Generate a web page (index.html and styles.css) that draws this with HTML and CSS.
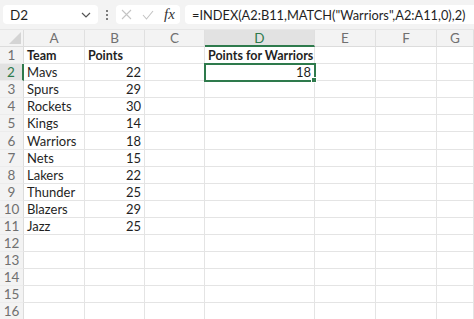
FILE: index.html
```html
<!DOCTYPE html>
<html lang="en">
<head>
    <meta charset="UTF-8">
    <title>INDEX MATCH</title>
    <link rel="stylesheet" href="styles.css">
</head>
<body>
    <div class="topbar">
        <div class="namebox">
            <span>D2</span>
            <svg class="chev" width="10" height="6" viewBox="0 0 10 6"><path d="M1 1 L5 5 L9 1" fill="none" stroke="#555" stroke-width="1.2"/></svg>
        </div>
        <div class="dots"><i></i><i></i><i></i></div>
        <div class="fxbox">
            <svg width="11" height="11" viewBox="0 0 11 11"><path d="M1 1 L10 10 M10 1 L1 10" stroke="#c4c4c4" stroke-width="1.1"/></svg>
            <svg width="12" height="10" viewBox="0 0 12 10"><path d="M1 5 L4.5 9 L11 1" fill="none" stroke="#c4c4c4" stroke-width="1.1"/></svg>
            <span class="fx">fx</span>
        </div>
        <div class="formula">=INDEX(A2:B11,MATCH("Warriors",A2:A11,0),2)</div>
    </div>

    <div class="sheet">
        <div class="corner"></div>
        <div class="colhead">A</div><div class="colhead">B</div><div class="colhead">C</div>
        <div class="colhead sel">D</div><div class="colhead">E</div><div class="colhead">F</div><div class="colhead">G</div>

        <div class="rowhead">1</div><div class="cell b">Team</div><div class="cell b">Points</div><div class="cell"></div><div class="cell b">Points for Warriors</div><div class="cell"></div><div class="cell"></div><div class="cell"></div>
        <div class="rowhead sel">2</div><div class="cell">Mavs</div><div class="cell num">22</div><div class="cell"></div><div class="cell num active">18</div><div class="cell"></div><div class="cell"></div><div class="cell"></div>
        <div class="rowhead">3</div><div class="cell">Spurs</div><div class="cell num">29</div><div class="cell"></div><div class="cell"></div><div class="cell"></div><div class="cell"></div><div class="cell"></div>
        <div class="rowhead">4</div><div class="cell">Rockets</div><div class="cell num">30</div><div class="cell"></div><div class="cell"></div><div class="cell"></div><div class="cell"></div><div class="cell"></div>
        <div class="rowhead">5</div><div class="cell">Kings</div><div class="cell num">14</div><div class="cell"></div><div class="cell"></div><div class="cell"></div><div class="cell"></div><div class="cell"></div>
        <div class="rowhead">6</div><div class="cell">Warriors</div><div class="cell num">18</div><div class="cell"></div><div class="cell"></div><div class="cell"></div><div class="cell"></div><div class="cell"></div>
        <div class="rowhead">7</div><div class="cell">Nets</div><div class="cell num">15</div><div class="cell"></div><div class="cell"></div><div class="cell"></div><div class="cell"></div><div class="cell"></div>
        <div class="rowhead">8</div><div class="cell">Lakers</div><div class="cell num">22</div><div class="cell"></div><div class="cell"></div><div class="cell"></div><div class="cell"></div><div class="cell"></div>
        <div class="rowhead">9</div><div class="cell">Thunder</div><div class="cell num">25</div><div class="cell"></div><div class="cell"></div><div class="cell"></div><div class="cell"></div><div class="cell"></div>
        <div class="rowhead">10</div><div class="cell">Blazers</div><div class="cell num">29</div><div class="cell"></div><div class="cell"></div><div class="cell"></div><div class="cell"></div><div class="cell"></div>
        <div class="rowhead">11</div><div class="cell">Jazz</div><div class="cell num">25</div><div class="cell"></div><div class="cell"></div><div class="cell"></div><div class="cell"></div><div class="cell"></div>
        <div class="rowhead">12</div><div class="cell"></div><div class="cell"></div><div class="cell"></div><div class="cell"></div><div class="cell"></div><div class="cell"></div><div class="cell"></div>
        <div class="rowhead">13</div><div class="cell"></div><div class="cell"></div><div class="cell"></div><div class="cell"></div><div class="cell"></div><div class="cell"></div><div class="cell"></div>
        <div class="rowhead">14</div><div class="cell"></div><div class="cell"></div><div class="cell"></div><div class="cell"></div><div class="cell"></div><div class="cell"></div><div class="cell"></div>
        <div class="rowhead">15</div><div class="cell"></div><div class="cell"></div><div class="cell"></div><div class="cell"></div><div class="cell"></div><div class="cell"></div><div class="cell"></div>
        <div class="rowhead">16</div><div class="cell"></div><div class="cell"></div><div class="cell"></div><div class="cell"></div><div class="cell"></div><div class="cell"></div><div class="cell"></div>
    </div>
</body>
</html>
```

FILE: styles.css
```css
body {
    margin: 0;
    font-family: Lato, "Open Sans", sans-serif;
    background-color: #ffffff;
    color: #1f1f1f;
    overflow: hidden;
}
.topbar {
    height: 30px;
    display: flex;
    align-items: center;
    background-color: #f3f3f3;
    border-bottom: 1px solid #e6e6e6;
    box-sizing: border-box;
    padding-left: 3px;
}
.namebox {
    width: 95px;
    height: 19px;
    background-color: #ffffff;
    border-radius: 4px;
    display: flex;
    align-items: center;
    justify-content: space-between;
    padding: 0 7px 0 7px;
    box-sizing: border-box;
    font-size: 13.5px;
}
.dots {
    width: 18px;
    display: flex;
    flex-direction: column;
    align-items: center;
    gap: 2px;
}
.dots i {
    width: 2px;
    height: 2px;
    background-color: #555;
    border-radius: 1px;
}
.fxbox {
    width: 64px;
    height: 19px;
    background-color: #ffffff;
    border-radius: 4px;
    display: flex;
    align-items: center;
    gap: 10px;
    padding-left: 5px;
    box-sizing: border-box;
}
.fx {
    font-family: "Liberation Serif", serif;
    font-style: italic;
    font-size: 15px;
    color: #333;
}
.formula {
    flex: 1;
    height: 19px;
    margin-left: 5px;
    background-color: #ffffff;
    border-radius: 4px 0 0 4px;
    display: flex;
    align-items: center;
    padding-left: 7px;
    font-size: 12.8px;
    white-space: nowrap;
}
.sheet {
    display: grid;
    grid-template-columns: 24px 61px 60px 60px 110px 61px 61px 1fr;
    grid-template-rows: 17px repeat(16, 17.1px);
    font-size: 13px;
}
.corner {
    background-color: #f3f3f3;
    border-right: 1px solid #dcdcdc;
    border-bottom: 1px solid #dcdcdc;
    position: relative;
}
.corner::after {
    content: "";
    position: absolute;
    right: 2px;
    bottom: 2px;
    border-left: 12px solid transparent;
    border-bottom: 12px solid #d4d4d4;
}
.colhead {
    background-color: #f3f3f3;
    border-right: 1px solid #e0e0e0;
    border-bottom: 1px solid #dcdcdc;
    color: #707070;
    font-size: 13.5px;
    display: flex;
    align-items: center;
    justify-content: center;
}
.colhead.sel {
    background-color: #e2e2e2;
    border-bottom: 2px solid #2e7a4c;
    color: #2e7a4c;
}
.rowhead {
    background-color: #f3f3f3;
    border-right: 1px solid #dcdcdc;
    border-bottom: 1px solid #ececec;
    color: #707070;
    font-size: 13.5px;
    display: flex;
    align-items: center;
    justify-content: center;
}
.rowhead.sel {
    background-color: #e2e2e2;
    border-right: 2px solid #2e7a4c;
    color: #2e7a4c;
}
.cell {
    border-right: 1px solid #e4e4e4;
    border-bottom: 1px solid #e4e4e4;
    padding: 0 3px;
    display: flex;
    align-items: center;
    white-space: nowrap;
    box-sizing: border-box;
}
.cell.b {
    font-weight: bold;
    font-size: 12.5px;
}
.cell.num {
    justify-content: flex-end;
}
.cell.active {
    outline: 2px solid #2e7a4c;
    outline-offset: -1px;
    position: relative;
}
.cell.active::after {
    content: "";
    position: absolute;
    right: -3px;
    bottom: -3px;
    width: 4px;
    height: 4px;
    background-color: #2e7a4c;
    border: 1px solid #ffffff;
}
```
